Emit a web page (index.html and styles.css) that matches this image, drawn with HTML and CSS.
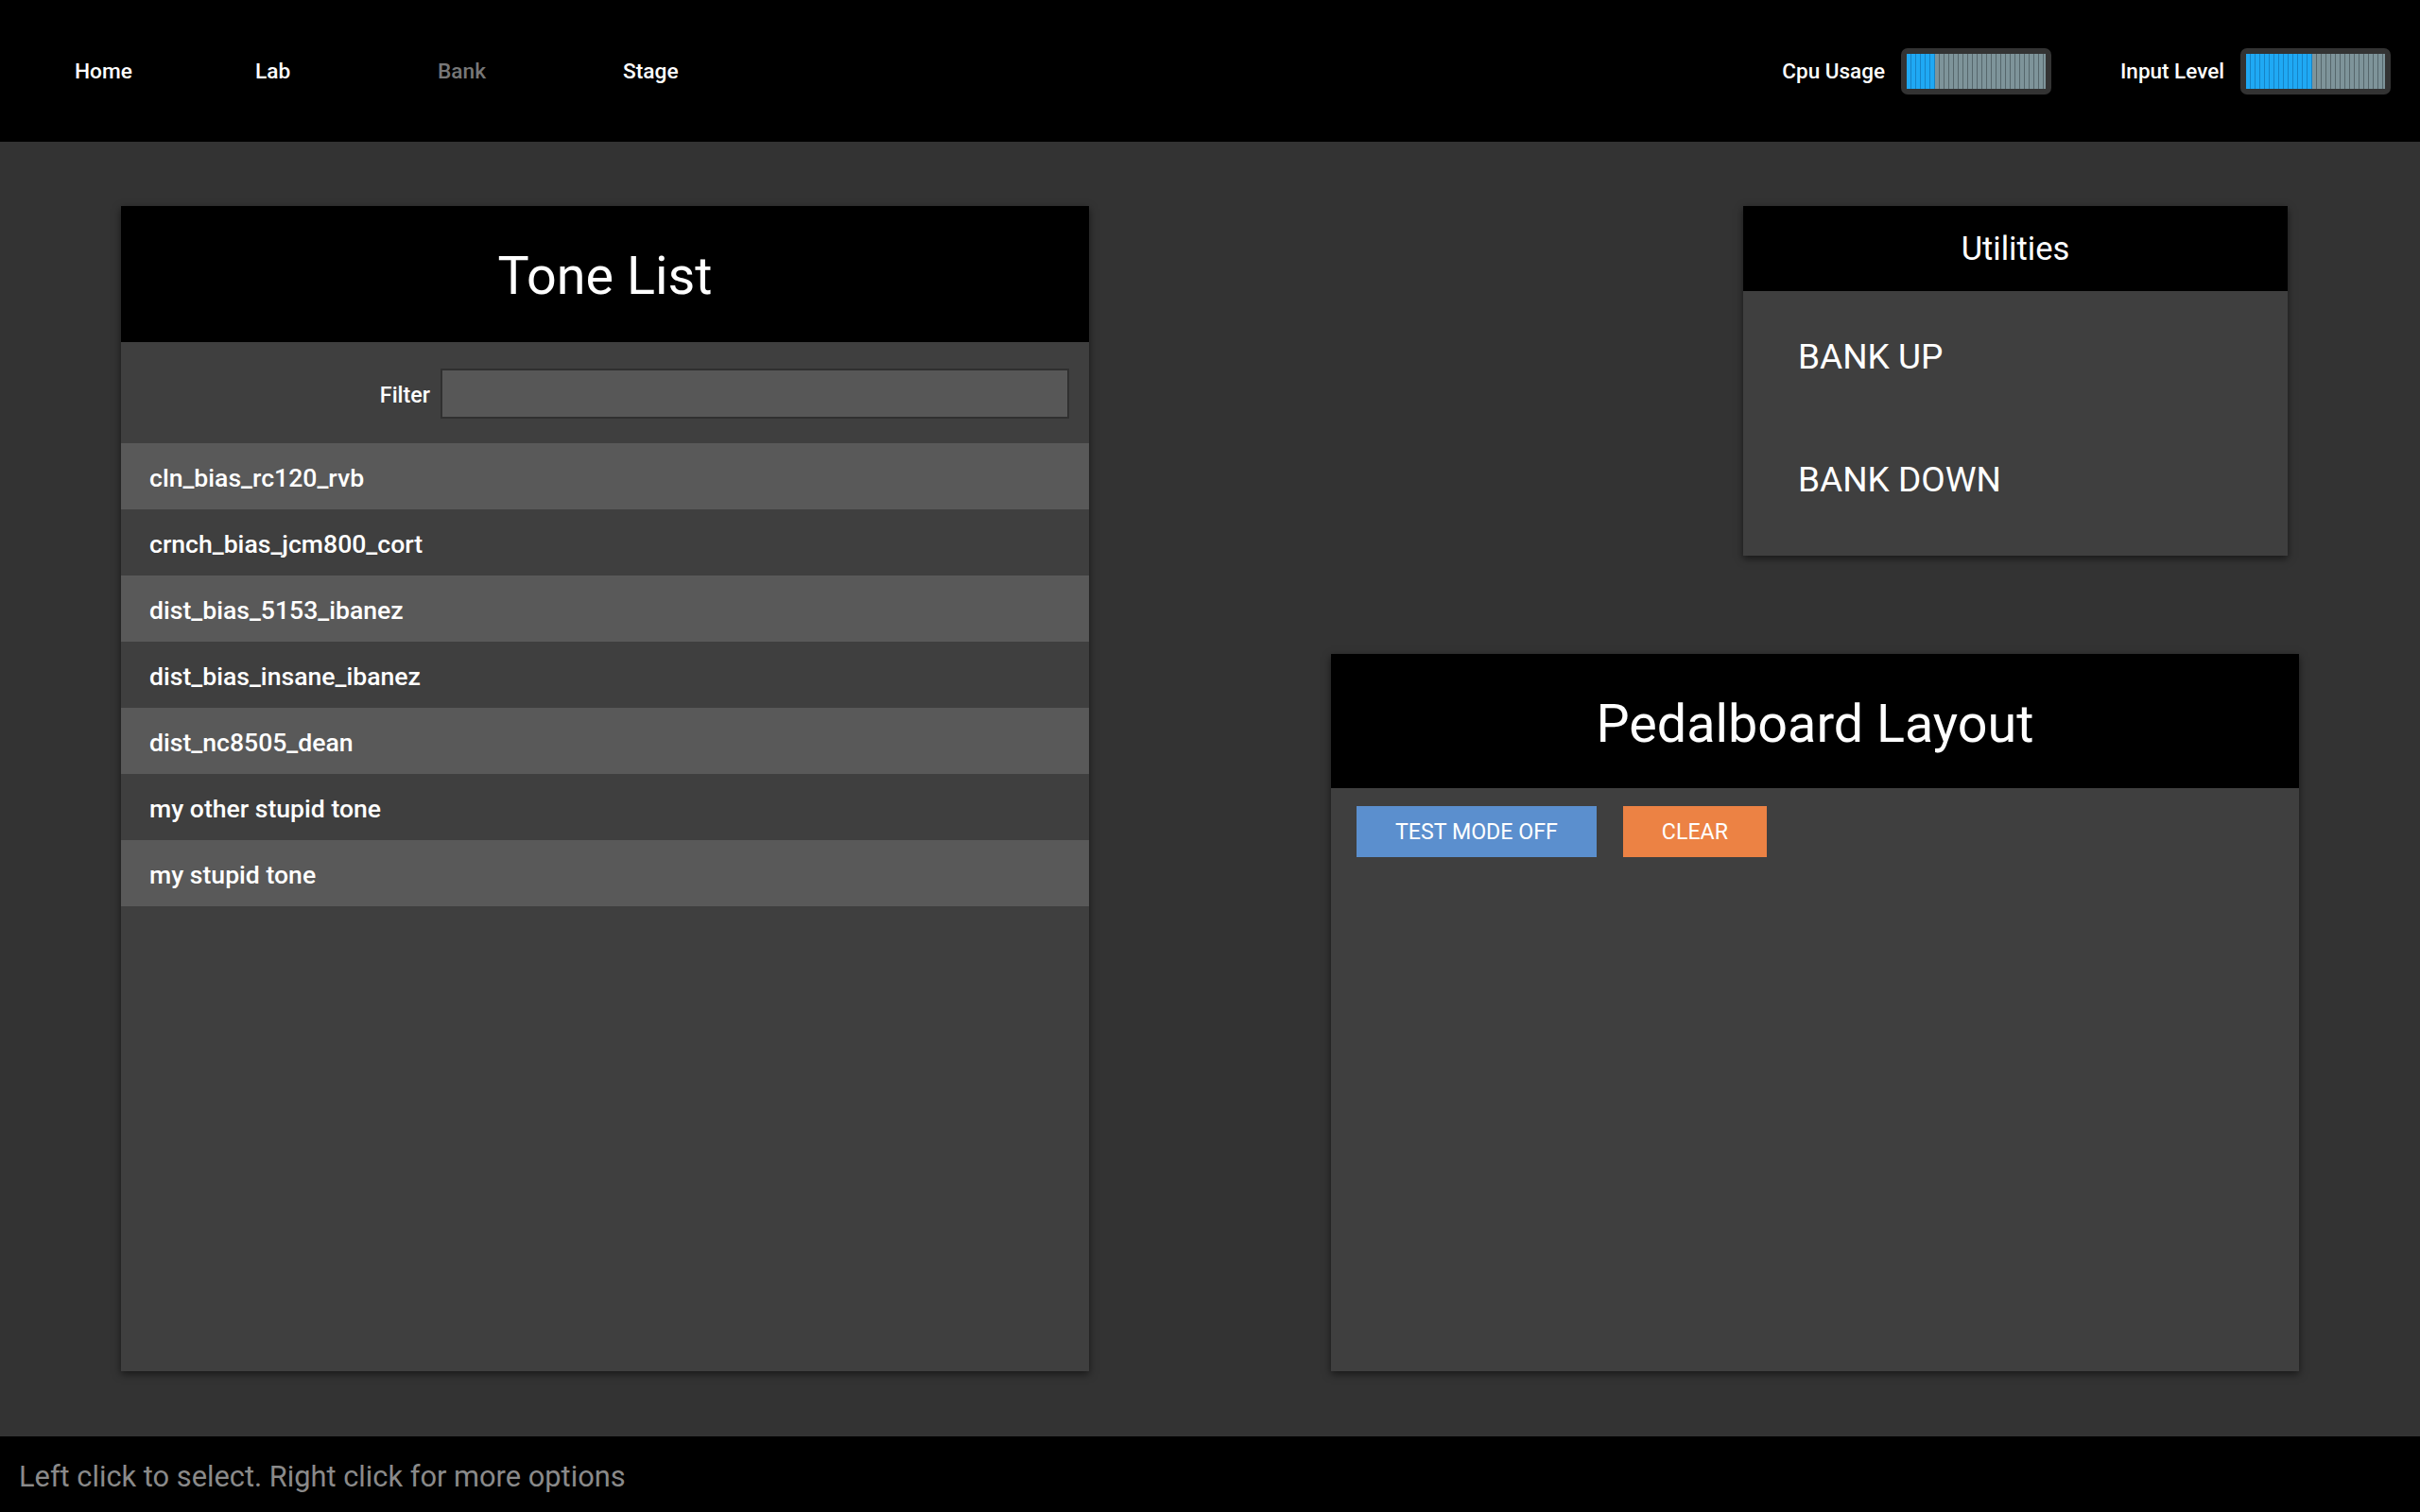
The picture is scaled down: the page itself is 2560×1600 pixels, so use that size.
FILE: index.html
```html
<!DOCTYPE html>
<html>
<head>
<meta charset="utf-8">
<link rel="stylesheet" href="styles.css">
</head>
<body>
<div class="app">
  <header class="topbar">
    <nav class="nav">
      <a class="nav-item nav-item--home">Home</a>
      <a class="nav-item nav-item--lab">Lab</a>
      <a class="nav-item nav-item--bank nav-item--active">Bank</a>
      <a class="nav-item">Stage</a>
    </nav>
    <div class="meters">
      <div class="meter-group">
        <span class="meter-label">Cpu Usage</span>
        <div class="meter"><div class="meter-track"><div class="meter-fill" style="width:30px"></div><div class="meter-rest"></div></div></div>
      </div>
      <div class="meter-group">
        <span class="meter-label">Input Level</span>
        <div class="meter"><div class="meter-track"><div class="meter-fill" style="width:70px"></div><div class="meter-rest"></div></div></div>
      </div>
    </div>
  </header>

  <main class="main">
    <section class="panel tone-list">
      <div class="panel-head panel-head--big"><h1 class="panel-title">Tone List</h1></div>
      <div class="filter-row">
        <label class="filter-label">Filter</label>
        <input class="filter-input" type="text">
      </div>
      <ul class="tones">
        <li class="tone tone--alt">cln_bias_rc120_rvb</li>
        <li class="tone">crnch_bias_jcm800_cort</li>
        <li class="tone tone--alt">dist_bias_5153_ibanez</li>
        <li class="tone">dist_bias_insane_ibanez</li>
        <li class="tone tone--alt">dist_nc8505_dean</li>
        <li class="tone">my other stupid tone</li>
        <li class="tone tone--alt">my stupid tone</li>
      </ul>
    </section>

    <div class="right-col">
      <section class="panel utilities">
        <div class="panel-head panel-head--small"><h2 class="util-title">Utilities</h2></div>
        <div class="util-body">
          <div class="util-item">BANK UP</div>
          <div class="util-item">BANK DOWN</div>
        </div>
      </section>

      <section class="panel pedalboard">
        <div class="panel-head panel-head--big pedal-head"><h1 class="panel-title">Pedalboard Layout</h1></div>
        <div class="pedal-actions">
          <button class="btn btn--blue">TEST MODE OFF</button>
          <button class="btn btn--orange">CLEAR</button>
        </div>
      </section>
    </div>
  </main>

  <footer class="statusbar">Left click to select. Right click for more options</footer>
</div>
</body>
</html>
```

FILE: styles.css
```css
* { box-sizing: border-box; }
html, body { margin: 0; padding: 0; }
body {
  width: 2560px;
  height: 1600px;
  background: #333333;
  font-family: Roboto, "Liberation Sans", sans-serif;
  color: #ffffff;
  overflow: hidden;
}
.app { display: flex; flex-direction: column; height: 1600px; }

.topbar {
  height: 150px;
  background: #000;
  display: flex;
  align-items: center;
  justify-content: space-between;
  padding: 0 31px 0 79px;
  flex: none;
}
.nav { display: flex; align-items: center; }
.nav-item {
  width: 194px;
  font-size: 22.7px;
  font-weight: 500;
  color: #fff;
  text-decoration: none;
}
.nav-item--home { width: 191px; }
.nav-item--lab { width: 193px; }
.nav-item--bank { width: 196px; }
.nav-item--active { color: #777777; }

.meters { display: flex; align-items: center; gap: 73px; }
.meter-group { display: flex; align-items: center; gap: 17px; }
.meter-label { font-size: 22.5px; font-weight: 500; color: #fff; }
.meter {
  width: 159px;
  height: 49px;
  background: #333333;
  border-radius: 7px;
  padding: 6px;
}
.meter-track { display: flex; height: 37px; width: 147px; }
.meter-fill {
  height: 100%;
  background: repeating-linear-gradient(90deg, #1fa9f4 0 4px, #1683c6 4px 5px);
}
.meter-rest {
  flex: 1;
  height: 100%;
  background: repeating-linear-gradient(90deg, #7e949a 0 4px, #56676c 4px 5px);
}

.main {
  flex: 1;
  display: flex;
  justify-content: space-between;
  padding: 68px 128px 0 128px;
}

.panel {
  background: #3f3f3f;
  box-shadow: 0 3px 8px rgba(0,0,0,0.55);
}
.panel-head {
  background: #000;
  display: flex;
  align-items: center;
  justify-content: center;
}
.panel-head--big { height: 144px; padding-top: 6px; }
.pedal-head { height: 142px; padding-top: 8px; }
.panel-title {
  margin: 0;
  font-size: 55.7px;
  font-weight: 400;
  line-height: 1;
}

.tone-list { width: 1024px; height: 1233px; }
.filter-row {
  display: flex;
  align-items: center;
  justify-content: flex-end;
  gap: 11px;
  padding: 28px 21px 26px 0;
}
.filter-label { font-size: 23.3px; font-weight: 500; padding-top: 2px; }
.filter-input {
  width: 665px;
  height: 53px;
  background: #575757;
  border: 2px solid #303030;
  outline: none;
  margin: 0;
}
.tones { list-style: none; margin: 0; padding: 0; }
.tone {
  height: 70px;
  display: flex;
  align-items: center;
  padding: 2px 0 0 30px;
  font-size: 26.6px;
  font-weight: 500;
}
.tone--alt { background: #595959; }

.right-col {
  width: 1024px;
  display: flex;
  flex-direction: column;
  align-items: flex-end;
}
.utilities { width: 576px; height: 370px; margin-right: 12px; }
.panel-head--small { height: 90px; }
.util-title { margin: 0; font-size: 34.5px; font-weight: 400; }
.util-body { padding-top: 4px; }
.util-item {
  height: 130px;
  display: flex;
  align-items: center;
  padding-left: 58px;
  font-size: 37px;
  font-weight: 400;
}

.pedalboard { width: 1024px; height: 759px; margin-top: 104px; }
.pedal-actions { display: flex; gap: 28px; padding: 19px 27px; }
.btn {
  height: 54px;
  padding: 0 41px;
  border: none;
  font-family: Roboto, "Liberation Sans", sans-serif;
  font-size: 23.2px;
  font-weight: 400;
  color: #fff;
  cursor: pointer;
}
.btn--blue { background: #5b8fce; }
.btn--orange { background: #ec8244; }

.statusbar {
  height: 80px;
  flex: none;
  background: #000;
  color: #8a8a8a;
  font-size: 30.8px;
  display: flex;
  align-items: center;
  padding: 4px 0 0 20px;
}
```
